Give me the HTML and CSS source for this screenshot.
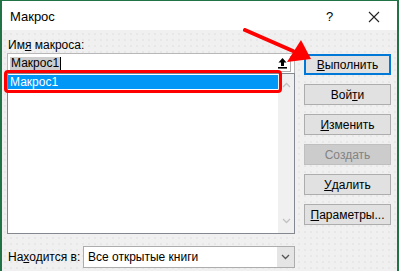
FILE: index.html
```html
<!DOCTYPE html>
<html lang="ru">
<head>
  <meta charset="UTF-8">
  <title>Макрос</title>
  <link rel="stylesheet" href="styles.css">
</head>
<body>
  <div class="window">
    <div class="titlebar">
      <span class="title">Макрос</span>
      <span class="help">?</span>
      <span class="close">
        <svg width="12" height="12" viewBox="0 0 12 12"><path d="M1 1 L11 11 M11 1 L1 11" stroke="#222" stroke-width="1.1" fill="none"/></svg>
      </span>
    </div>

    <div class="content">
      <div class="main">
        <div class="name-label">Им<u>я</u> макроса:</div>
        <div class="name-input">
          <span class="sel">Макрос1</span><span class="caret"></span>
          <span class="up-btn">
            <svg width="11" height="12" viewBox="0 0 11 12"><path d="M5.5 1 L1.5 5.5 H4 V9 H7 V5.5 H9.5 Z" fill="#000"/><rect x="1" y="10" width="9" height="1.6" fill="#000"/></svg>
          </span>
        </div>
        <div class="list">
          <div class="items">
            <div class="item active">Макрос1</div>
          </div>
          <div class="scroll">
            <svg width="9" height="6" viewBox="0 0 9 6"><path d="M1 5 L4.5 1.5 L8 5" stroke="#c2c2c2" stroke-width="1.3" fill="none"/></svg>
            <svg width="9" height="6" viewBox="0 0 9 6"><path d="M1 1 L4.5 4.5 L8 1" stroke="#c2c2c2" stroke-width="1.3" fill="none"/></svg>
          </div>
        </div>
        <div class="where">
          <span class="where-label">На<u>х</u>одится в:</span>
          <div class="select">
            <span class="select-text">Все открытые книги</span>
            <span class="select-arrow">
              <svg width="9" height="6" viewBox="0 0 9 6"><path d="M1 1 L4.5 4.5 L8 1" stroke="#555" stroke-width="1.3" fill="none"/></svg>
            </span>
          </div>
        </div>
      </div>

      <div class="buttons">
        <div class="btn default"><u>В</u>ыполнить</div>
        <div class="btn">Вой<u>т</u>и</div>
        <div class="btn"><u>И</u>зменить</div>
        <div class="btn disabled">Создать</div>
        <div class="btn"><u>У</u>далить</div>
        <div class="btn"><u>П</u>араметры...</div>
      </div>
    </div>

    <!-- annotation marks over the dialog -->
    <div class="mark"></div>
    <svg class="arrow" width="70" height="40" viewBox="0 0 70 40">
      <path d="M2 2 L50 23" stroke="#f00" stroke-width="4" stroke-linecap="round"/>
      <path d="M58 12 L68 31 L44 34 Z" fill="#f00"/>
    </svg>
  </div>
</body>
</html>
```

FILE: styles.css
```css
* { box-sizing: border-box; }
body {
  margin: 0;
  font-family: 'Liberation Sans', Arial, sans-serif;
  font-size: 12px;
  color: #000;
}
.window {
  position: relative;
  width: 399px;
  height: 271px;
  border-top: 1px solid #217346;
  border-left: 2px solid #217346;
  border-right: 2px solid #217346;
  background-color: #f0f0f0;
  background-image: radial-gradient(circle, #e2e2e2 0.6px, transparent 0.9px);
  background-size: 6px 6px;
  overflow: hidden;
}
.titlebar {
  height: 29px;
  background: white;
  display: flex;
  align-items: center;
  padding-left: 8px;
}
.title {
  font-size: 13px;
  flex: 1;
  padding-top: 2px;
}
.help {
  font-size: 13px;
  width: 14px;
  margin-right: 28px;
  padding-top: 2px;
}
.close {
  display: flex;
  margin-right: 17px;
  padding-top: 2px;
}
.content {
  display: flex;
  padding-left: 5px;
}
.main {
  width: 288px;
}
.name-label {
  padding-top: 8px;
  line-height: 15px;
  height: 23px;
  padding-left: 1px;
}
.name-input {
  height: 20px;
  background: white;
  border: 1px solid #b8b8b8;
  border-bottom: none;
  display: flex;
  align-items: center;
  padding-left: 2px;
}
.sel {
  background: #cdcdcd;
  padding: 0 1px;
  line-height: 13px;
}
.caret {
  width: 1px;
  height: 14px;
  background: #000;
}
.up-btn {
  margin-left: auto;
  margin-right: 3px;
  width: 17px;
  height: 16px;
  background: white;
  border-right: 1px solid #b0b0b0;
  border-bottom: 1px solid #b0b0b0;
  display: flex;
  align-items: center;
  justify-content: center;
}
.list {
  height: 161px;
  background: white;
  border: 1px solid #828790;
  display: flex;
}
.items {
  flex: 1;
}
.item {
  height: 14px;
  line-height: 14px;
  margin-top: 1px;
  padding-left: 2px;
}
.item.active {
  background: #0097f7;
  color: white;
}
.scroll {
  width: 16px;
  display: flex;
  flex-direction: column;
  justify-content: space-between;
  align-items: center;
  padding: 8px 0 9px;
  background: #f0f0f0;
}
.where {
  display: flex;
  align-items: center;
  margin-top: 12px;
}
.where-label {
  width: 76px;
  padding-left: 1px;
}
.select {
  width: 212px;
  height: 22px;
  background: white;
  border: 1px solid #adadad;
  display: flex;
  align-items: center;
}
.select-text {
  flex: 1;
  padding-left: 4px;
}
.select-arrow {
  width: 17px;
  height: 100%;
  background: #e5e5e5;
  display: flex;
  align-items: center;
  justify-content: center;
}
.buttons {
  margin-left: 9px;
  margin-top: 24px;
  width: 87px;
  display: flex;
  flex-direction: column;
  gap: 9px;
}
.btn {
  height: 21px;
  background: #e1e1e1;
  border: 1px solid #adadad;
  display: flex;
  align-items: center;
  justify-content: center;
}
.btn.default {
  border: 2px solid #0078d7;
}
.btn.disabled {
  color: #838383;
  background: #cccccc;
  border-color: #bfbfbf;
}
.mark {
  position: absolute;
  left: 2px;
  top: 69px;
  width: 278px;
  height: 23px;
  border: 3px solid #f00;
  border-radius: 4px;
}
.arrow {
  position: absolute;
  left: 241px;
  top: 27px;
}
```
